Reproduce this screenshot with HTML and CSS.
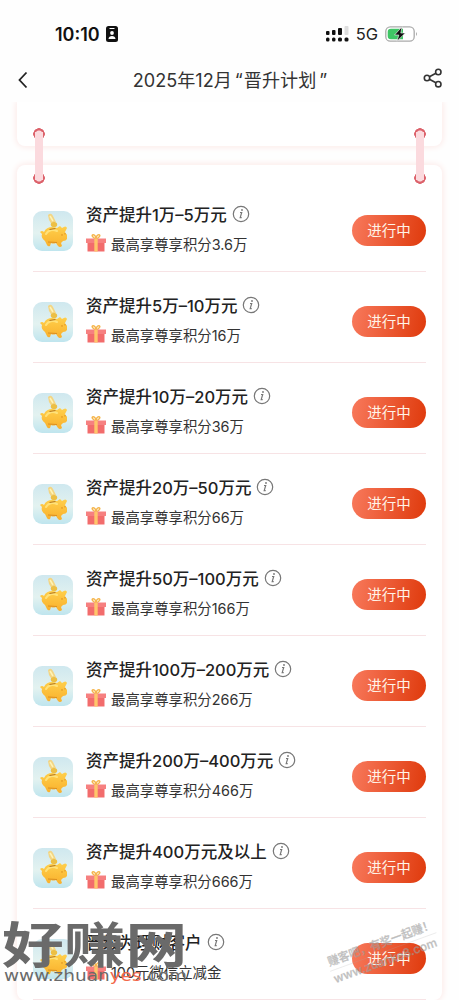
FILE: index.html
```html
<!DOCTYPE html>
<html lang="zh-CN">

<head>
    <meta charset="UTF-8">
    <meta name="viewport" content="width=device-width, initial-scale=1.0">
    <title>晋升计划</title>
    <link rel="stylesheet" href="styles.css">
</head>

<body>
    <!-- shared icons -->
    <svg class="defs" width="0" height="0">
        <defs>
            <linearGradient id="sky" x1="0" y1="0" x2="0" y2="1">
                <stop offset="0" stop-color="#cfe8ef" />
                <stop offset=".55" stop-color="#e3f2f0" />
                <stop offset="1" stop-color="#bfe5ee" />
            </linearGradient>
            <linearGradient id="gold" x1="0" y1="0" x2="0" y2="1">
                <stop offset="0" stop-color="#ffd04c" />
                <stop offset="1" stop-color="#f9b02c" />
            </linearGradient>
            <symbol id="pig" viewBox="0 0 40 40">
                <rect width="40" height="40" rx="9" fill="url(#sky)" />
                <path d="M15 4q3-3 5 1l3 6-4 3-3-5z" fill="#f3d583" />
                <path d="M17 5l3 5" stroke="#fff3b5" stroke-width="1.5" />
                <ellipse cx="21" cy="13.500" rx="3.200" ry="2.600" fill="#ecbf45" />
                <path d="M7 21q2-2 4 0c2-5 8-6 13-4l3-2 2 2q4-3 5 0l-2 4c1 2 2 2 2 3v4q-1 2-4 2l-2 2 1 3q-2 2-4 0l-2-3q-3 1-5 0l-1 3q-2 1-3-1l-2-4c-3-2-4-5-3-7z" fill="url(#gold)" />
                <path d="M13 23c2-4 7-5 11-3" fill="none" stroke="#ffe27a" stroke-width="2" stroke-linecap="round" />
                <path d="M16.500 18.500l6-1" stroke="#b5771f" stroke-width="1.200" />
                <path d="M15 31l9 .5M29 23v1.800M32 22v1.500" stroke="#dc8f20" />
            </symbol>
            <symbol id="gift" viewBox="0 0 20 18">
                <path d="M10 5C7 4 5 1 7 .8S10 3 10 5c0-2 1-4.500 3-4.200S13 4 10 5z" fill="none" stroke="#f5b64e" stroke-width="1.500" />
                <path d="M0 4.500h20V9H0z" fill="#f68080" />
                <path d="M1.500 9h17v8.500h-17z" fill="#f26c6c" />
                <path d="M8.300 4.500h3.400v13H8.300z" fill="#ffc66a" />
            </symbol>
            <symbol id="info" viewBox="0 0 18 18">
                <circle cx="9" cy="9" r="7.700" fill="none" stroke="#777" stroke-width="1.200" />
                <path d="M8 7.500h1.700l-1.500 5.200h1.500" fill="none" stroke="#777" stroke-width="1.200" />
                <circle cx="10" cy="5" r=".9" fill="#777" />
            </symbol>
        </defs>
    </svg>

    <div class="status-bar">
        <div class="clock">
            <span>10:10</span>
            <svg width="12" height="16" viewBox="0 0 12 16">
                <rect width="12" height="16" rx="2.500" fill="#111" />
                <path d="M3.500 2.500h5" stroke="#fff" />
                <circle cx="6" cy="7" r="1.900" fill="#fff" />
                <path d="M2.500 13c0-4 7-4 7 0z" fill="#fff" />
            </svg>
        </div>
        <div class="signals">
            <svg width="24" height="16" viewBox="0 0 24 16">
                <g fill="#111">
                    <rect x="1" y="5" width="3.500" height="4" rx="1" />
                    <rect x="7" y="4" width="3.500" height="5" rx="1" />
                    <rect x="13" y="2" width="4" height="7" rx="1" />
                    <rect x="1" y="11.500" width="3.500" height="4" rx="1.500" />
                    <rect x="7" y="11.500" width="3.500" height="4" rx="1.500" />
                    <rect x="13" y="11.500" width="4" height="4" rx="1.500" />
                    <rect x="19.500" y="11.500" width="4" height="4" rx="1.500" />
                </g>
                <rect x="19.500" y="0" width="4" height="9" rx="1" fill="#ddd" />
            </svg>
            <span>5G</span>
            <svg width="33" height="16" viewBox="0 0 33 16">
                <rect x=".8" y=".8" width="28.400" height="14.400" rx="4.500" fill="#fff" stroke="#aaa" stroke-width="1.300" />
                <path d="M6 2.700h12v10.600H6a3.300 3.300 0 0 1-3.300-3.300V6A3.300 3.300 0 0 1 6 2.700z" fill="#3fc565" />
                <path d="M31 6q2 2 0 4z" fill="#aaa" />
                <path d="M17 .8L9.500 9h4.300L12 15.200 20.300 7h-4.500z" fill="#111" stroke="#fff" stroke-width=".6" />
            </svg>
        </div>
    </div>

    <div class="nav">
        <svg class="back" width="10" height="18" viewBox="0 0 10 18">
            <path d="M8.500 1.500L1.500 9l7 7.500" fill="none" stroke="#222" stroke-width="1.800" />
        </svg>
        <div class="nav-title">2025年12月<span class="quote">“</span>晋升计划<span class="quote">”</span></div>
        <svg class="share" width="20" height="20" viewBox="0 0 20 20">
            <g fill="none" stroke="#333" stroke-width="1.600">
                <circle cx="4" cy="10" r="2.700" />
                <circle cx="15.300" cy="4" r="2.700" />
                <circle cx="15.300" cy="16.200" r="2.700" />
                <path d="M6.400 8.700l6.500-3.400M6.400 11.300l6.500 3.500" />
            </g>
        </svg>
    </div>

    <div class="page">
        <div class="card card-prev"></div>
        <div class="card card-tasks">
            <div class="ring ring-left"></div>
            <div class="ring ring-right"></div>

            <div class="task">
                <svg class="pig"><use href="#pig" /></svg>
                <div class="text">
                    <div class="title">资产提升1万–5万元<svg class="info"><use href="#info" /></svg></div>
                    <div class="reward"><svg class="gift"><use href="#gift" /></svg>最高享尊享积分3.6万</div>
                </div>
                <div class="btn">进行中</div>
            </div>
            <div class="task">
                <svg class="pig"><use href="#pig" /></svg>
                <div class="text">
                    <div class="title">资产提升5万–10万元<svg class="info"><use href="#info" /></svg></div>
                    <div class="reward"><svg class="gift"><use href="#gift" /></svg>最高享尊享积分16万</div>
                </div>
                <div class="btn">进行中</div>
            </div>
            <div class="task">
                <svg class="pig"><use href="#pig" /></svg>
                <div class="text">
                    <div class="title">资产提升10万–20万元<svg class="info"><use href="#info" /></svg></div>
                    <div class="reward"><svg class="gift"><use href="#gift" /></svg>最高享尊享积分36万</div>
                </div>
                <div class="btn">进行中</div>
            </div>
            <div class="task">
                <svg class="pig"><use href="#pig" /></svg>
                <div class="text">
                    <div class="title">资产提升20万–50万元<svg class="info"><use href="#info" /></svg></div>
                    <div class="reward"><svg class="gift"><use href="#gift" /></svg>最高享尊享积分66万</div>
                </div>
                <div class="btn">进行中</div>
            </div>
            <div class="task">
                <svg class="pig"><use href="#pig" /></svg>
                <div class="text">
                    <div class="title">资产提升50万–100万元<svg class="info"><use href="#info" /></svg></div>
                    <div class="reward"><svg class="gift"><use href="#gift" /></svg>最高享尊享积分166万</div>
                </div>
                <div class="btn">进行中</div>
            </div>
            <div class="task">
                <svg class="pig"><use href="#pig" /></svg>
                <div class="text">
                    <div class="title">资产提升100万–200万元<svg class="info"><use href="#info" /></svg></div>
                    <div class="reward"><svg class="gift"><use href="#gift" /></svg>最高享尊享积分266万</div>
                </div>
                <div class="btn">进行中</div>
            </div>
            <div class="task">
                <svg class="pig"><use href="#pig" /></svg>
                <div class="text">
                    <div class="title">资产提升200万–400万元<svg class="info"><use href="#info" /></svg></div>
                    <div class="reward"><svg class="gift"><use href="#gift" /></svg>最高享尊享积分466万</div>
                </div>
                <div class="btn">进行中</div>
            </div>
            <div class="task">
                <svg class="pig"><use href="#pig" /></svg>
                <div class="text">
                    <div class="title">资产提升400万元及以上<svg class="info"><use href="#info" /></svg></div>
                    <div class="reward"><svg class="gift"><use href="#gift" /></svg>最高享尊享积分666万</div>
                </div>
                <div class="btn">进行中</div>
            </div>
            <div class="task">
                <svg class="pig"><use href="#pig" /></svg>
                <div class="text">
                    <div class="title">晋级为理财客户<svg class="info"><use href="#info" /></svg></div>
                    <div class="reward"><svg class="gift"><use href="#gift" /></svg>100元微信立减金</div>
                </div>
                <div class="btn">进行中</div>
            </div>
        </div>
    </div>

    <!-- watermarks -->
    <svg class="mark mark-left" width="200" height="80" viewBox="0 0 200 80">
        <text class="mark-name" transform="translate(2 43) scale(1.26 1)" textLength="147" lengthAdjust="spacingAndGlyphs">好赚网</text>
        <text class="mark-url" x="4" y="61" textLength="183" lengthAdjust="spacingAndGlyphs">www.zhuan<tspan fill="#f2684a">yes</tspan>.com</text>
    </svg>
    <svg class="mark mark-right" width="130" height="80" viewBox="0 0 130 80">
        <g transform="rotate(-20 10 50)">
            <text x="9" y="51" textLength="112" lengthAdjust="spacingAndGlyphs">赚客吧，有奖一起赚！</text>
            <path d="M8 56h113" />
            <text x="9" y="69" textLength="109" lengthAdjust="spacingAndGlyphs">www.zuanke8.com</text>
        </g>
    </svg>
</body>

</html>
```
FILE: styles.css
```css
* {
    box-sizing: border-box;
}

body {
    position: relative;
    margin: 0;
    height: 1000px;
    overflow: hidden;
    background: #fefefe;
    color: #222;
    font-family: Inter, "Noto Sans CJK SC", sans-serif;
}

svg {
    display: block;
    flex: none;
}

.defs {
    position: absolute;
}

.status-bar {
    display: flex;
    justify-content: space-between;
    align-items: center;
    height: 52px;
    padding: 16px 41px 0 55px;
}

.clock {
    display: flex;
    align-items: center;
    gap: 6px;
    font-size: 18px;
    font-weight: 600;
    color: #111;
}

.signals {
    display: flex;
    align-items: center;
    gap: 7px;
    font-size: 16.5px;
}

.nav {
    display: flex;
    justify-content: space-between;
    align-items: center;
    height: 50px;
    padding: 5px 16px 0 18px;
}

.nav-title {
    margin-left: 10px;
    font-size: 18.1px;
    line-height: 26px;
    color: #333;
}

.quote {
    padding: 0 1px 0 3px;
}

.share {
    margin-top: -3px;
}

.page {
    height: 898px;
    padding: 0 17px;
    overflow: hidden;
}

.card {
    background: #fff;
    box-shadow: 0 0 6px 1px #fce9e7;
}

.card-prev {
    height: 44px;
    border-radius: 0 0 8px 8px;
}

.card-tasks {
    position: relative;
    margin-top: 19px;
    padding: 16px 16px 0;
    border-radius: 8px;
}

/* straps that tie the two cards together */
.ring {
    position: absolute;
    top: -37px;
    width: 12px;
    height: 56px;
    background:
        linear-gradient(#fbdade, #fbdade) center / 8px 48px no-repeat,
        radial-gradient(circle at 6px 6px, #fbdade 3px, #dc626b 4px, #dc626b 5.5px, transparent 6px) top / 12px 12px no-repeat,
        radial-gradient(circle at 6px 6px, #fbdade 3px, #dc626b 4px, #dc626b 5.5px, transparent 6px) bottom / 12px 12px no-repeat;
}

.ring-left {
    left: 16px;
}

.ring-right {
    right: 16px;
}

.task {
    display: flex;
    align-items: center;
    height: 91px;
    padding-top: 8px;
    border-bottom: 1px solid #f7e3e5;
}

.pig {
    width: 40px;
    height: 40px;
    margin-top: 2px;
}

.text {
    flex: 1;
    margin: -4px 0 0 13px;
}

.title {
    display: flex;
    align-items: center;
    gap: 5px;
    height: 30px;
    font-size: 16.5px;
    font-weight: 500;
    white-space: nowrap;
}

.info {
    width: 18px;
    height: 18px;
}

.reward {
    display: flex;
    align-items: center;
    gap: 5px;
    height: 28px;
    font-size: 14.4px;
    color: #333;
}

.gift {
    width: 20px;
    height: 18px;
}

.btn {
    width: 74px;
    height: 31px;
    border-radius: 16px;
    background: linear-gradient(100deg, #f8795c, #df3a0c);
    color: #fff3e8;
    font-size: 14.5px;
    line-height: 31px;
    text-align: center;
}

.mark {
    position: absolute;
}

.mark-left {
    left: 0;
    top: 920px;
    fill: #6a6a6a;
}

.mark-name {
    font-size: 49px;
    font-weight: 700;
}

.mark-url {
    font-family: "DejaVu Sans", sans-serif;
    font-size: 15px;
}

.mark-right {
    left: 320px;
    top: 915px;
    fill: #999;
    stroke: #aaa;
    stroke-width: 0.3;
    font-size: 12px;
    font-weight: 500;
    opacity: 0.65;
}
```
